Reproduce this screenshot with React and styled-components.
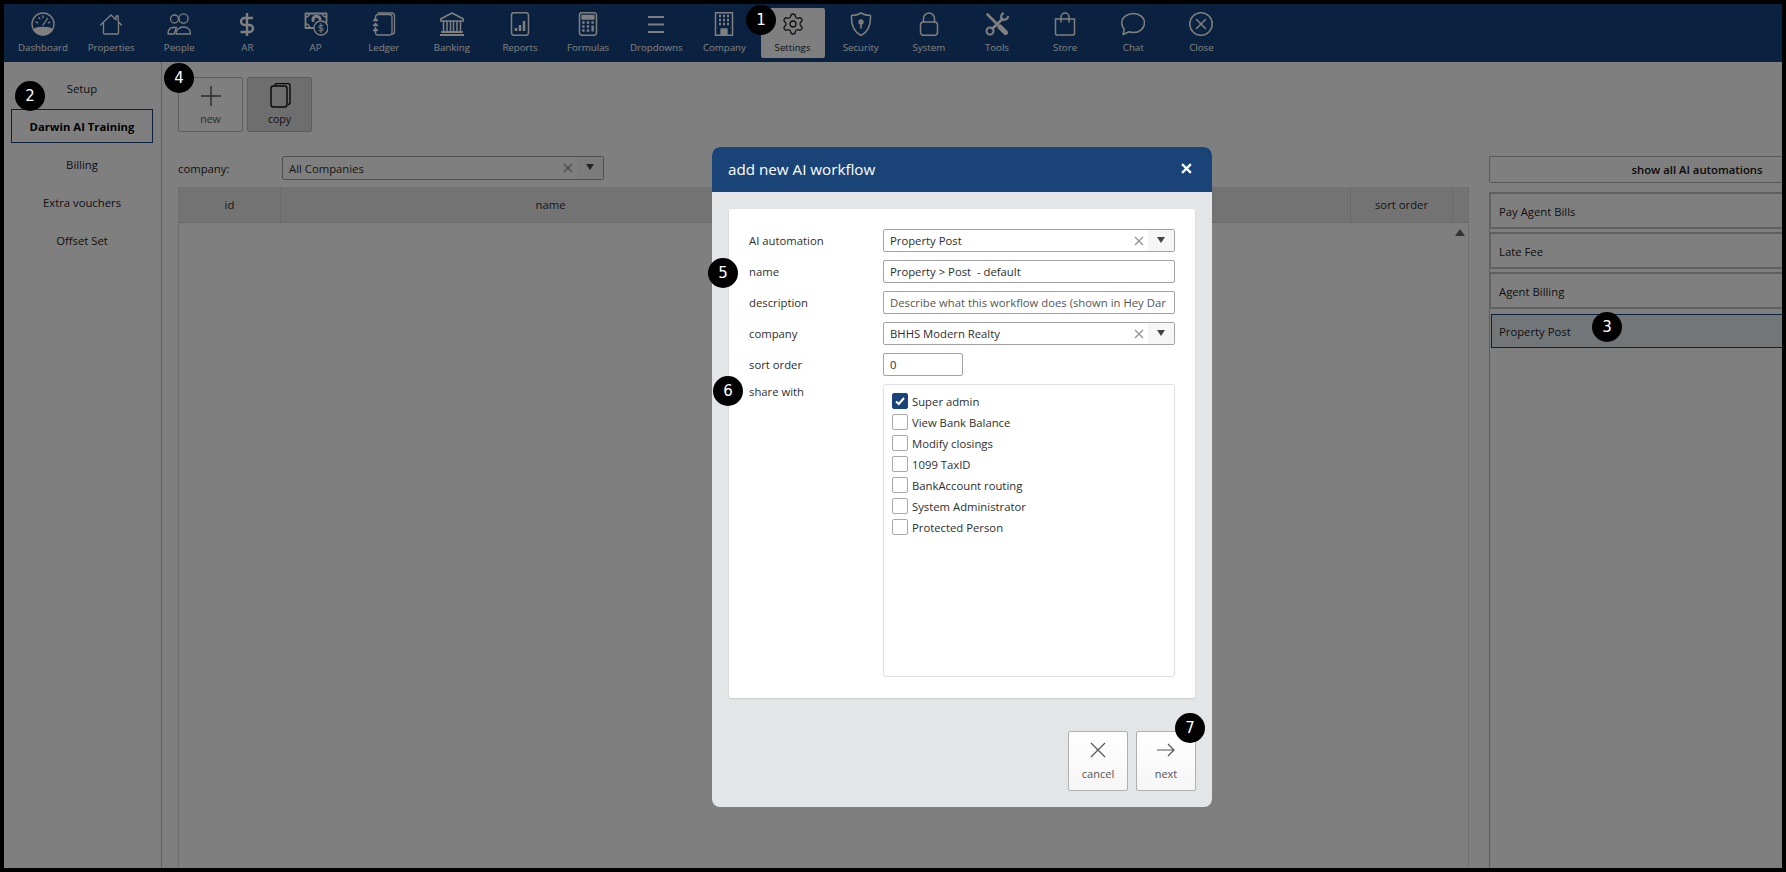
import React from 'react';
import styled, { createGlobalStyle, css } from 'styled-components';
import { Settings } from 'lucide-react';

const FONT = '"Open Sans", "Noto Sans", sans-serif';

const GlobalStyle = createGlobalStyle`
  html, body { margin: 0; height: 100%; background: #000; }
  body { font-family: ${FONT}; font-size: 11.3px; color: #2e2e2e; }
  * { box-sizing: border-box; }
`;

// --- page frame ---
const Frame = styled.div`
  position: relative;
  width: 1786px;
  height: 872px;
  border: 4px solid #000;
  background: #fff;
  overflow: hidden;
  display: flex;
  flex-direction: column;
`;

const Scrim = styled.div`
  position: absolute;
  inset: 0;
  background: rgba(0, 0, 0, 0.5);
`;

// --- top nav ---
const TopBar = styled.nav`
  flex: 0 0 58px;
  display: flex;
  background: #154480;
  padding: 4px 0 0 7px;
`;

const NavItem = styled.div`
  flex: 0 0 64px;
  height: 50px;
  margin-right: 4.15px;
  border-radius: 2px;
  display: flex;
  flex-direction: column;
  align-items: center;
  padding-top: 4px;
  color: ${(p) => (p.$active ? '#222' : '#fff')};
  background: ${(p) => (p.$active ? '#fff' : 'transparent')};
`;

const NavLabel = styled.span`
  margin-top: 5px;
  font-size: 9.7px;
  line-height: 14px;
  white-space: nowrap;
`;

const NavIcon = styled.svg.attrs({ viewBox: '0 0 24 24', width: 24, height: 24 })`
  display: block;
  flex: none;
  fill: none;
  stroke: currentColor;
  stroke-width: 1.3;
  stroke-linecap: round;
  stroke-linejoin: round;
`;

// --- three columns under the nav ---
const Main = styled.div`
  flex: 1;
  min-height: 0;
  display: flex;
`;

const Sidebar = styled.aside`
  flex: 0 0 158px;
  border-right: 1px solid #c4c4c4;
  padding: 9px 7px 0;
  display: flex;
  flex-direction: column;
  gap: 4px;
`;

const SideItem = styled.div`
  width: 142px;
  height: 34px;
  display: flex;
  align-items: center;
  justify-content: center;
  color: #222;
  ${(p) =>
    p.$active &&
    css`
      border: 1px solid #154480;
      font-weight: 700;
      color: #000;
    `}
`;

const Content = styled.section`
  flex: 1;
  min-width: 0;
  padding: 15px 20px 0 16px;
  display: flex;
  flex-direction: column;
`;

const Toolbar = styled.div`
  display: flex;
  gap: 4px;
  height: 55px;
`;

const ToolButton = styled.button`
  width: 65px;
  height: 55px;
  padding: 5px 0 0;
  font: inherit;
  font-size: 10.5px;
  color: ${(p) => (p.$disabled ? '#222' : '#555')};
  border: 1px solid #bbb;
  border-radius: 2px;
  background: ${(p) => (p.$disabled ? '#dcdcdc' : '#fff')};
  display: flex;
  flex-direction: column;
  align-items: center;
  gap: 3px;
`;

const FilterRow = styled.div`
  display: flex;
  align-items: center;
  margin-top: 24px;
  height: 24px;
`;

const FilterLabel = styled.span`
  flex: 0 0 104px;
  color: #222;
`;

const SelectBox = styled.div`
  display: flex;
  align-items: center;
  width: ${(p) => p.$width || '100%'};
  height: ${(p) => p.$height || '23px'};
  border: 1px solid #a2a2a2;
  border-radius: 2px;
  background: #fff;
  padding-left: 6px;
  color: #2e2e2e;
`;

const SelectText = styled.span`
  flex: 1;
  white-space: nowrap;
`;

const ClearIcon = styled.svg.attrs({ viewBox: '0 0 10 10', width: 10, height: 10 })`
  flex: none;
  fill: none;
  stroke: #999;
  stroke-width: 1.5;
  margin-right: 4px;
`;

const ArrowCell = styled.span`
  flex: 0 0 26px;
  align-self: stretch;
  display: flex;
  align-items: center;
  justify-content: center;
  background: #f6f6f6;
  &::after {
    content: '';
    margin-top: -2px;
    border-left: 4px solid transparent;
    border-right: 4px solid transparent;
    border-top: 6px solid #444;
  }
`;

const Grid = styled.div`
  margin-top: 7px;
  flex: 1;
  border: 1px solid #dcdcdc;
  border-top: 0;
  border-bottom: 0;
  display: flex;
  flex-direction: column;
`;

const GridHead = styled.div`
  flex: 0 0 36px;
  display: grid;
  grid-template-columns: 102px 540px 1fr 102px 15px;
  background: #e6e7e9;
  border-bottom: 1px solid #d4d4d4;
`;

const HeadCell = styled.div`
  display: flex;
  align-items: center;
  justify-content: center;
  border-right: 1px solid #d4d4d4;
  color: #2e2e2e;
  &:last-child {
    border-right: 0;
  }
`;

const GridBody = styled.div`
  flex: 1;
  display: flex;
  justify-content: flex-end;
  padding: 6px 3px 0 0;
`;

const ScrollUp = styled.span`
  width: 0;
  height: 0;
  border-left: 5px solid transparent;
  border-right: 5px solid transparent;
  border-bottom: 7px solid #666;
`;

const RightPanel = styled.aside`
  flex: 0 0 293px;
  overflow: hidden;
  padding-top: 94px;
  display: flex;
  flex-direction: column;
`;

const ShowAll = styled.div`
  flex: 0 0 27px;
  width: 416px;
  border: 1px solid #b4b4b4;
  border-radius: 2px;
  display: flex;
  align-items: center;
  justify-content: center;
  font-weight: 600;
  color: #111;
`;

const AutomationList = styled.div`
  margin-top: 9px;
  width: 416px;
  flex: 1;
  border-left: 1px solid #b4b4b4;
  display: flex;
  flex-direction: column;
  gap: 3px;
`;

const Automation = styled.div`
  margin-left: ${(p) => (p.$active ? '1px' : '-1px')};
  margin-top: ${(p) => (p.$active ? '2px' : '0')};
  height: ${(p) => (p.$active ? '34px' : '37px')};
  display: flex;
  align-items: center;
  padding: ${(p) => (p.$active ? '0 0 0 7px' : '1px 0 0 8px')};
  color: #222;
  border: ${(p) => (p.$active ? '1px solid #154480' : '2px solid #c0c0c0')};
  background: ${(p) => (p.$active ? '#e7ecf2' : '#fff')};
`;

// --- modal ---
const Modal = styled.div`
  position: absolute;
  left: 708px;
  top: 143px;
  width: 500px;
  height: 660px;
  border-radius: 8px;
  overflow: hidden;
  background: #e4e5e7;
  display: flex;
  flex-direction: column;
`;

const ModalHead = styled.header`
  flex: 0 0 45px;
  display: flex;
  align-items: center;
  justify-content: space-between;
  padding: 0 20px 2px 16px;
  background: #1a4477;
  color: #fff;
  font-size: 15.2px;
`;

const ModalClose = styled.svg.attrs({ viewBox: '0 0 10 10', width: 11, height: 11 })`
  fill: none;
  stroke: #fff;
  stroke-width: 2;
`;

const ModalBody = styled.div`
  flex: 1;
  min-height: 0;
  padding: 17px 17px 16px 17px;
  display: flex;
  flex-direction: column;
`;

const Card = styled.div`
  height: 489px;
  background: #fff;
  border-radius: 2px;
  box-shadow: 0 1px 2px rgba(0, 0, 0, 0.12);
  padding: 20px 20px 21px 20px;
  display: grid;
  grid-template-columns: 134px 292px;
  grid-template-rows: repeat(5, 23px) 293px;
  row-gap: 8px;
  align-items: center;
`;

const FieldLabel = styled.label`
  color: #2e2e2e;
  ${(p) =>
    p.$top &&
    css`
      align-self: start;
    `}
`;

const TextInput = styled.input`
  width: ${(p) => p.$width || '100%'};
  height: 23px;
  border: 1px solid #a2a2a2;
  border-radius: 2px;
  padding: 0 8px 0 6px;
  font: inherit;
  color: #2e2e2e;
  outline: none;
  &::placeholder {
    color: #555;
    opacity: 1;
  }
`;

const ShareBox = styled.div`
  height: 293px;
  border: 1px solid #e0e0e0;
  border-radius: 3px;
  padding: 8px;
  display: flex;
  flex-direction: column;
  gap: 5px;
`;

const CheckRow = styled.div`
  display: flex;
  align-items: center;
  gap: 4px;
  height: 16px;
  color: #2e2e2e;
`;

const CheckBox = styled.span`
  flex: 0 0 16px;
  height: 16px;
  border: 1px solid ${(p) => (p.$checked ? '#1a4477' : '#a8a8a8')};
  border-radius: 2px;
  background: ${(p) => (p.$checked ? '#1a4477' : '#fff')};
  display: flex;
  align-items: center;
  justify-content: center;
`;

const ModalFooter = styled.div`
  margin-top: 33px;
  display: flex;
  justify-content: flex-end;
  gap: 8px;
  margin-right: -1px;
`;

const FootButton = styled.button`
  width: 60px;
  height: 60px;
  padding: 9px 0 0;
  font: inherit;
  font-size: 11px;
  color: #555;
  border: 1px solid #b0b0b0;
  border-radius: 2px;
  background: linear-gradient(#fff, #f6f6f6);
  display: flex;
  flex-direction: column;
  align-items: center;
  gap: 7px;
`;

const Badge = styled.span`
  position: absolute;
  left: ${(p) => p.$x - 15 - 4}px;
  top: ${(p) => p.$y - 15 - 4}px;
  width: 30px;
  height: 30px;
  border-radius: 50%;
  background: #000;
  color: #fff;
  font-size: 15px;
  font-family: "DejaVu Sans", sans-serif;
  display: flex;
  align-items: center;
  justify-content: center;
`;

// --- nav icons ---
const icons = {
  Dashboard: (
    <>
      <circle cx="12" cy="12" r="11" />
      <path d="M2.6 17.5C6 14.6 18 14.6 21.4 17.5A11 11 0 0 1 2.6 17.5Z" fill="currentColor" />
      <path d="M12 13l4.5-6.5M5 10l1.6.8M19 10l-1.6.8M8 5.5l.8 1.4M12 4v1.6" />
    </>
  ),
  Properties: (
    <path d="M1.5 13L12 3l5 4.7V4h2.2v5.8L22.5 13M4.5 10.5V21a1 1 0 0 0 1 1h13a1 1 0 0 0 1-1V10.5" />
  ),
  People: (
    <>
      <circle cx="7.5" cy="7" r="4" />
      <circle cx="16.5" cy="6.5" r="4.6" />
      <path d="M1 22c0-3 1.5-6 4.5-6.5h4L7 22ZM9 22c0-4 3-7 7.5-7s7 3 7 7Z" />
    </>
  ),
  AR: (
    <g strokeWidth="2.4" strokeLinecap="butt">
      <path d="M12 1v23" />
      <path d="M18 6H9.5a3.5 3.5 0 0 0 0 7h5a3.5 3.5 0 0 1 0 7H5.5" />
    </g>
  ),
  AP: (
    <>
      <path d="M13 16H1.5V1.5h21V10" strokeWidth="1.8" />
      <path d="M2 5c2 0 3-1 3.5-3M18.5 2c.3 2 1.5 3 3.5 3M2 12c2 0 3 .8 3.5 3" />
      <path d="M9 8.5a3.5 3.5 0 0 1 7-1.5" strokeWidth="3" />
      <circle cx="17" cy="16" r="7" fill="#154480" />
      <path d="M17 11.5v9M19 13.5h-3a1.3 1.3 0 0 0 0 2.6h2a1.3 1.3 0 0 1 0 2.6h-3.2" strokeWidth="1" />
    </>
  ),
  Ledger: (
    <>
      <path d="M6 1h14a2.5 2.5 0 0 1 2.5 2.5V20a2 2 0 0 1-2 2" />
      <path d="M3.5 8V5a2.5 2.5 0 0 1 2.5-2.5h11.5A2.5 2.5 0 0 1 20 5v15.5a2.5 2.5 0 0 1-2.5 2.5H6a2.5 2.5 0 0 1-2.5-2.5V19M3.5 11.5v1M3.5 15.5v1" />
      <path d="M1.5 8.5h4L3.5 6.5ZM1.5 13.5h4L3.5 11.5ZM1.5 18.5h4L3.5 16.5Z" fill="currentColor" />
    </>
  ),
  Banking: (
    <>
      <path d="M12 1L.5 7v2h23V7Z" strokeWidth="1.5" />
      <path d="M3.5 9.5V19M7 9.5V19M10.5 9.5V19M13.5 9.5V19M17 9.5V19M20.5 9.5V19" strokeWidth="1.5" />
      <path d="M2 20h20M.5 23h23" strokeWidth="2" />
    </>
  ),
  Reports: (
    <>
      <rect x="3.5" y="0.7" width="17" height="22.6" rx="2.5" strokeWidth="1.5" />
      <path d="M8 19v-3M12 19v-6M16 19V9" strokeWidth="2.5" strokeLinecap="butt" />
    </>
  ),
  Formulas: (
    <>
      <rect x="3.5" y="0.7" width="17" height="22.6" rx="2.5" strokeWidth="1.5" />
      <path d="M6 3.5h12V7H6Z" fill="currentColor" />
      <path d="M6.2 10.5h2.4M10.8 10.5h2.4M15.4 10.5h2.4M6.2 14.5h2.4M10.8 14.5h2.4M6.2 18.5h2.4M10.8 18.5h2.4M16.6 13.5v6" strokeWidth="2.4" strokeLinecap="butt" />
    </>
  ),
  Dropdowns: <path d="M4 5h16M4 12.5h16M4 20h16" strokeWidth="1.8" strokeLinecap="butt" />,
  Company: (
    <>
      <path d="M3.5.7h17v22.6h-17Z" strokeWidth="1.5" />
      <path d="M7 4h2M11 4h2M15 4h2M7 8h2M11 8h2M15 8h2M7 12h2M11 12h2M15 12h2" strokeWidth="2.4" strokeLinecap="butt" />
      <path d="M9 23v-6h6v6" fill="currentColor" />
    </>
  ),
  Security: (
    <>
      <path d="M12 1c3 1.8 6 2.5 9.5 2.5C22 13 19 20 12 23.5 5 20 2 13 2.5 3.5 6 3.5 9 2.8 12 1Z" strokeWidth="1.5" />
      <circle cx="12" cy="10" r="2" fill="currentColor" />
      <path d="M12 11v5" strokeWidth="1.6" />
    </>
  ),
  System: (
    <>
      <rect x="3.5" y="10" width="17" height="13.3" rx="3" strokeWidth="1.5" />
      <path d="M6.5 10V6.5a5.5 5.5 0 0 1 11 0V10" strokeWidth="1.5" />
    </>
  ),
  Tools: (
    <>
      <path d="M2.5 2.5L13 13" strokeWidth="2.6" />
      <path d="M15 15l5.5 5.5" strokeWidth="5" />
      <path d="M17.5 7L7.5 16.5" strokeWidth="2.6" />
      <circle cx="5" cy="19" r="3.5" strokeWidth="2" />
      <path d="M18 1.3a4.5 4.5 0 0 0-1 6.2 4.5 4.5 0 0 0 6-2.5" strokeWidth="2.2" />
    </>
  ),
  Store: (
    <>
      <path d="M2.5 7h19v14.3a1.8 1.8 0 0 1-1.8 1.8H4.3a1.8 1.8 0 0 1-1.8-1.8Z" strokeWidth="1.5" />
      <path d="M8 10V5a4 4 0 0 1 8 0v5" strokeWidth="1.5" />
    </>
  ),
  Chat: (
    <path d="M12.5 1.500c6 0 11 4 11 9.500s-5 9.500-11 9.500c-1.500 0-3-.3-4.300-.8L2 22.500l1.300-5.500C1.500 15.500.8 13.500.8 11c0-5.500 5.500-9.500 11.700-9.500Z" strokeWidth="1.5" />
  ),
  Close: (
    <>
      <circle cx="12" cy="12" r="11.2" strokeWidth="1.5" />
      <path d="M7.5 7.5l9 9M16.5 7.5l-9 9" strokeWidth="1.5" />
    </>
  ),
};

const navItems = [
  'Dashboard', 'Properties', 'People', 'AR', 'AP', 'Ledger', 'Banking', 'Reports', 'Formulas',
  'Dropdowns', 'Company', 'Settings', 'Security', 'System', 'Tools', 'Store', 'Chat', 'Close',
];

const sideItems = ['Setup', 'Darwin AI Training', 'Billing', 'Extra vouchers', 'Offset Set'];
const automations = ['Pay Agent Bills', 'Late Fee', 'Agent Billing', 'Property Post'];
const shareRoles = [
  'Super admin', 'View Bank Balance', 'Modify closings', '1099 TaxID',
  'BankAccount routing', 'System Administrator', 'Protected Person',
];
const badges = [
  [1, 761, 20], [2, 30, 96], [3, 1607, 327], [4, 179, 78], [5, 723, 273], [6, 728, 391], [7, 1190, 728],
];

const Select = ({ value, ...rest }) => (
  <SelectBox {...rest}>
    <SelectText>{value}</SelectText>
    <ClearIcon><path d="M1 1l8 8M9 1l-8 8" /></ClearIcon>
    <ArrowCell />
  </SelectBox>
);

export default function App() {
  return (
    <>
      <GlobalStyle />
      <Frame>
        <TopBar>
          {navItems.map((name) => (
            <NavItem key={name} $active={name === 'Settings'}>
              {name === 'Settings' ? (
                <Settings size={24} strokeWidth={1.3} color="#222" />
              ) : (
                <NavIcon>{icons[name]}</NavIcon>
              )}
              <NavLabel>{name}</NavLabel>
            </NavItem>
          ))}
        </TopBar>
        <Main>
          <Sidebar>
            {sideItems.map((name) => (
              <SideItem key={name} $active={name === 'Darwin AI Training'}>{name}</SideItem>
            ))}
          </Sidebar>
          <Content>
            <Toolbar>
              <ToolButton>
                <svg width="26" height="26" viewBox="0 0 26 26" fill="none" stroke="#555" strokeWidth="1.4">
                  <path d="M13 3v20M3 13h20" />
                </svg>
                new
              </ToolButton>
              <ToolButton $disabled>
                <svg width="26" height="26" viewBox="0 0 26 26" fill="none" stroke="#111" strokeWidth="1.4">
                  <path d="M8 2.5a2 2 0 0 1 2-2h11a2 2 0 0 1 2 2v17a2 2 0 0 1-2 2" />
                  <rect x="4" y="3" width="16" height="21" rx="2.5" />
                </svg>
                copy
              </ToolButton>
            </Toolbar>
            <FilterRow>
              <FilterLabel>company:</FilterLabel>
              <Select value="All Companies" $width="322px" $height="24px" />
            </FilterRow>
            <Grid>
              <GridHead>
                <HeadCell>id</HeadCell>
                <HeadCell>name</HeadCell>
                <HeadCell />
                <HeadCell>sort order</HeadCell>
                <HeadCell />
              </GridHead>
              <GridBody><ScrollUp /></GridBody>
            </Grid>
          </Content>
          <RightPanel>
            <ShowAll>show all AI automations</ShowAll>
            <AutomationList>
              {automations.map((name) => (
                <Automation key={name} $active={name === 'Property Post'}>{name}</Automation>
              ))}
            </AutomationList>
          </RightPanel>
        </Main>

        <Scrim />

        <Modal>
          <ModalHead>
            add new AI workflow
            <ModalClose><path d="M1 1l8 8M9 1l-8 8" /></ModalClose>
          </ModalHead>
          <ModalBody>
            <Card>
              <FieldLabel>AI automation</FieldLabel>
              <Select value="Property Post" />
              <FieldLabel>name</FieldLabel>
              <TextInput readOnly value="Property > Post  - default" />
              <FieldLabel>description</FieldLabel>
              <TextInput readOnly placeholder="Describe what this workflow does (shown in Hey Darwin)" />
              <FieldLabel>company</FieldLabel>
              <Select value="BHHS Modern Realty" />
              <FieldLabel>sort order</FieldLabel>
              <TextInput readOnly value="0" $width="80px" />
              <FieldLabel $top>share with</FieldLabel>
              <ShareBox>
                {shareRoles.map((role, i) => (
                  <CheckRow key={role}>
                    <CheckBox $checked={i === 0}>
                      {i === 0 && (
                        <svg width="12" height="12" viewBox="0 0 12 12" fill="none" stroke="#fff" strokeWidth="2">
                          <path d="M2 6.5l2.8 2.5L10 3" />
                        </svg>
                      )}
                    </CheckBox>
                    {role}
                  </CheckRow>
                ))}
              </ShareBox>
            </Card>
            <ModalFooter>
              <FootButton>
                <svg width="18" height="18" viewBox="0 0 18 18" fill="none" stroke="#555" strokeWidth="1.2">
                  <path d="M2 2l14 14M16 2L2 16" />
                </svg>
                cancel
              </FootButton>
              <FootButton>
                <svg width="18" height="18" viewBox="0 0 18 18" fill="none" stroke="#555" strokeWidth="1.2">
                  <path d="M0 9h17M11 3l6 6-6 6" />
                </svg>
                next
              </FootButton>
            </ModalFooter>
          </ModalBody>
        </Modal>

        {badges.map(([n, x, y]) => (
          <Badge key={n} $x={x} $y={y}>{n}</Badge>
        ))}
      </Frame>
    </>
  );
}
